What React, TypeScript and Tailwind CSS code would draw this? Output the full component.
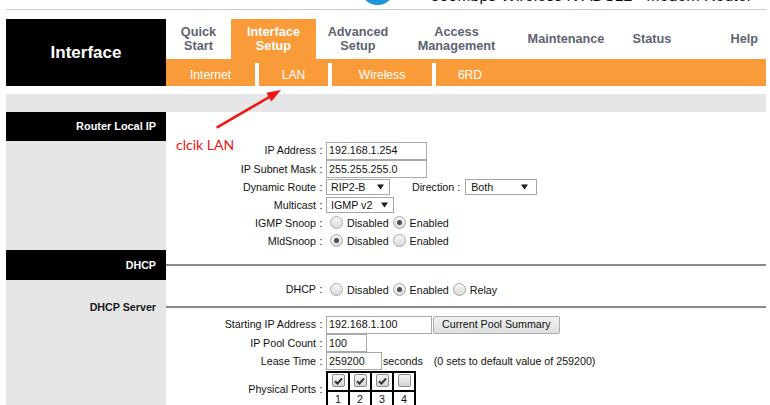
import React from "react";

const ORANGE = "bg-[#f99b38]";

function Radio({ checked }: { checked?: boolean }) {
  return (
    <span className="inline-flex w-[13px] h-[13px] shrink-0 rounded-full border border-[#a8a8a8] bg-linear-to-b from-[#f7f7f7] to-[#dadada] items-center justify-center">
      {checked && <span className="w-[5px] h-[5px] rounded-full bg-[#4d4d4d]" />}
    </span>
  );
}

function Check({ checked }: { checked?: boolean }) {
  return (
    <span className="inline-flex w-[13px] h-[13px] rounded-[2px] border border-[#8c8c8c] bg-linear-to-b from-[#f5f5f5] to-[#d4d4d4] items-center justify-center">
      {checked && (
        <svg width="9" height="8" viewBox="0 0 9 8">
          <path d="M1 4.3 L3.5 6.6 L8 1.3" stroke="#333" strokeWidth="2" fill="none" />
        </svg>
      )}
    </span>
  );
}

function Arrow() {
  return (
    <svg width="7" height="6" viewBox="0 0 7 6" className="shrink-0">
      <path d="M0 0.5 H7 L3.5 5.5 Z" fill="#1a1a1a" />
    </svg>
  );
}

function Select({ value, className }: { value: string; className: string }) {
  return (
    <div className={`h-[16px] border border-[#a6a6a6] flex items-center justify-between bg-white ${className}`}>
      <span className="leading-none">{value}</span>
      <Arrow />
    </div>
  );
}

function Input({ value, className }: { value: string; className: string }) {
  return (
    <div className={`h-[18px] border border-[#a9a9a9] flex items-center pl-[2px] bg-white leading-none ${className}`}>
      {value}
    </div>
  );
}

function Row({ label, className, children }: { label: string; className: string; children?: React.ReactNode }) {
  return (
    <div className={`flex items-center ${className}`}>
      <div className="w-[150px] text-right whitespace-nowrap">{label}</div>
      <div className="w-[10px] text-center">:</div>
      <div className="flex items-center">{children}</div>
    </div>
  );
}

function RadioText({ checked, text }: { checked?: boolean; text: string }) {
  return (
    <>
      <span className="ml-[4px] flex">
        <Radio checked={checked} />
      </span>
      <span className="ml-[4px] pt-[1px]">{text}</span>
    </>
  );
}

export default function App() {
  return (
    <div className="w-[770px] h-[405px] overflow-hidden bg-white relative font-['Liberation_Sans',Arial,sans-serif] text-[#111]">
      <div className="ml-[6px] w-[760px]">
        {/* top strip */}
        <div className="h-[9px] overflow-hidden flex items-end">
          <div className="ml-[354px] mb-[4.5px] w-[35px] h-[35px] rounded-full bg-[#1a96da] shrink-0" />
          <div className="ml-auto mr-[14px] mb-[5px] text-[16px] leading-none whitespace-nowrap text-[#111]">
            300Mbps Wireless N ADSL2+ Modem Router
          </div>
        </div>
        <div className="h-px bg-[#cccccc]" />
        <div className="h-[9px]" />

        {/* header */}
        <div className="flex h-[67px]">
          <div className="w-[160px] bg-black flex items-center justify-center text-white font-bold text-[17px] pt-[1px]">
            Interface
          </div>
          <div className="flex-1 flex flex-col">
            <div className="h-[40px] flex text-[12.7px] font-bold leading-[14.5px] text-[#5d6371] text-center">
              <div className="w-[65px] flex items-center justify-center">Quick<br />Start</div>
              <div className={`w-[85px] flex items-center justify-center text-white ${ORANGE}`}>Interface<br />Setup</div>
              <div className="w-[84px] flex items-center justify-center">Advanced<br />Setup</div>
              <div className="w-[113px] flex items-center justify-center">Access<br />Management</div>
              <div className="w-[106px] flex items-center justify-center">Maintenance</div>
              <div className="w-[66px] flex items-center justify-center">Status</div>
              <div className="flex-1 flex items-center justify-end pr-[8px]">Help</div>
            </div>
            <div className={`h-[27px] pt-[4px] ${ORANGE}`}>
              <div className="h-[23px] flex text-white text-[12.1px]">
                <div className="w-[89px] flex items-center justify-center pt-[1px]">Internet</div>
                <div className="w-[4px] bg-white" />
                <div className="w-[69px] flex items-center justify-center pt-[1px]">LAN</div>
                <div className="w-[4px] bg-white" />
                <div className="w-[100px] flex items-center justify-center pt-[1px]">Wireless</div>
                <div className="w-[4px] bg-white" />
                <div className="w-[68px] flex items-center justify-center pt-[1px]">6RD</div>
              </div>
            </div>
          </div>
        </div>

        <div className="h-[8px]" />
        <div className="h-[18px] bg-[#e6e6e6]" />

        {/* Router Local IP */}
        <div className="flex text-[10.7px]">
          <div className="w-[160px] bg-[#e6e6e6]">
            <div className="h-[29px] bg-black text-white font-bold text-[10.9px] flex items-center justify-end pr-[10px]">
              Router Local IP
            </div>
          </div>
          <div className="flex-1 pt-[29px] relative">
            <div className="absolute left-[10px] top-[26px] text-[14px] leading-none text-[#f01414] font-['Lato',sans-serif] whitespace-nowrap">
              clcik LAN
            </div>
            <Row label="IP Address" className="h-[19px]">
              <Input value="192.168.1.254" className="w-[101px]" />
            </Row>
            <Row label="IP Subnet Mask" className="h-[18px]">
              <Input value="255.255.255.0" className="w-[101px]" />
            </Row>
            <Row label="Dynamic Route" className="h-[18px]">
              <Select value="RIP2-B" className="w-[64px] pl-[4px] pr-[5px]" />
              <span className="ml-[22px]">Direction</span>
              <span className="ml-[3px]">:</span>
              <Select value="Both" className="ml-[5px] w-[72px] pl-[5px] pr-[8px]" />
            </Row>
            <Row label="Multicast" className="h-[18px]">
              <Select value="IGMP v2" className="w-[68px] pl-[4px] pr-[5px]" />
            </Row>
            <Row label="IGMP Snoop" className="h-[18px]">
              <RadioText text="Disabled" />
              <RadioText text="Enabled" checked />
            </Row>
            <Row label="MldSnoop" className="h-[18px]">
              <RadioText text="Disabled" checked />
              <RadioText text="Enabled" />
            </Row>
          </div>
        </div>

        {/* DHCP */}
        <div className="flex text-[10.7px]">
          <div className="w-[160px] bg-[#e6e6e6]">
            <div className="h-[30px] bg-black text-white font-bold flex items-center justify-end pr-[10px]">DHCP</div>
            <div className="h-[19px]" />
            <div className="h-[16px] flex items-center justify-end pr-[10px] font-bold text-[#1a1a1a]">DHCP Server</div>
            <div className="h-[200px]" />
          </div>
          <div className="flex-1">
            <div className="h-[30px] flex items-center">
              <div className="w-full h-[2px] bg-[#8a8a8a]" />
            </div>
            <Row label="DHCP" className="h-[19px]">
              <RadioText text="Disabled" />
              <RadioText text="Enabled" checked />
              <RadioText text="Relay" />
            </Row>
            <div className="h-[16px] flex items-center">
              <div className="w-full h-[2px] bg-[#8a8a8a]" />
            </div>
            <Row label="Starting IP Address" className="h-[19px]">
              <Input value="192.168.1.100" className="w-[106px]" />
              <div className="ml-[1px] h-[18px] px-[8px] border border-[#adadad] rounded-[2px] bg-linear-to-b from-[#f2f2f2] to-[#dedede] flex items-center leading-none">
                Current Pool Summary
              </div>
            </Row>
            <Row label="IP Pool Count" className="h-[18px]">
              <Input value="100" className="w-[41px]" />
            </Row>
            <Row label="Lease Time" className="h-[18px]">
              <Input value="259200" className="w-[56px]" />
              <span className="ml-[1px]">seconds</span>
              <span className="ml-[11px]">(0 sets to default value of 259200)</span>
            </Row>
            <div className="flex items-start mt-[1px]">
              <div className="w-[150px] text-right mt-[10px]">Physical Ports</div>
              <div className="w-[10px] text-center mt-[10px]">:</div>
              <table className="border-separate border-spacing-0 border border-black">
                <tbody>
                  <tr>
                    {[true, true, true, false].map((c, i) => (
                      <td key={i} className="border border-black w-[22px] h-[19px] p-0 align-top text-center">
                        <div className="flex justify-center pt-[1px]">
                          <Check checked={c} />
                        </div>
                      </td>
                    ))}
                  </tr>
                  <tr>
                    {["1", "2", "3", "4"].map((n) => (
                      <td key={n} className="border border-black h-[17px] p-0 text-center align-top pt-[1px] leading-[12px]">
                        {n}
                      </td>
                    ))}
                  </tr>
                </tbody>
              </table>
            </div>
          </div>
        </div>
      </div>

      {/* annotation arrow */}
      <svg className="absolute left-0 top-0 pointer-events-none" width="770" height="405">
        <line x1="216.7" y1="127.7" x2="271" y2="96" stroke="#f01414" strokeWidth="2.6" />
        <polygon points="281,90 271.4,101.4 266.4,92.8" fill="#f01414" />
      </svg>
    </div>
  );
}
